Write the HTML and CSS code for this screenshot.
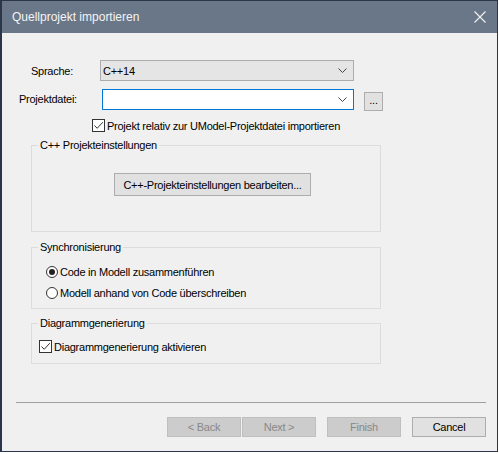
FILE: index.html
```html
<!DOCTYPE html>
<html lang="de">
<head>
<meta charset="utf-8">
<title>Quellprojekt importieren</title>
<link rel="stylesheet" href="styles.css">
</head>
<body>
<div class="window">
  <div class="titlebar">
    <span class="title">Quellprojekt importieren</span>
    <svg class="close" width="12" height="12" viewBox="0 0 12 12"><path d="M0.5 0.5 L11.5 11.5 M11.5 0.5 L0.5 11.5" stroke="#f2f2f2" stroke-width="1.1" fill="none"/></svg>
  </div>
  <div class="content">
    <div class="row row-lang">
      <span class="label label-lang">Sprache:</span>
      <div class="combo">
        <span class="combo-text">C++14</span>
        <svg class="chev" width="9" height="5" viewBox="0 0 9 5"><path d="M0.5 0.5 L4.5 4.5 L8.5 0.5" stroke="#444" fill="none"/></svg>
      </div>
    </div>
    <div class="row row-file">
      <span class="label label-file">Projektdatei:</span>
      <div class="field">
        <svg class="chev" width="9" height="5" viewBox="0 0 9 5"><path d="M0.5 0.5 L4.5 4.5 L8.5 0.5" stroke="#444" fill="none"/></svg>
      </div>
      <div class="dots-btn">...</div>
    </div>
    <div class="row row-rel">
      <span class="checkbox"><svg width="11" height="11" viewBox="0 0 11 11"><path d="M1.5 5.5 L4.2 8.3 L9.8 2.2" stroke="#333" stroke-width="1" fill="none"/></svg></span>
      <span class="opt-text">Projekt relativ zur UModel-Projektdatei importieren</span>
    </div>

    <div class="group group-cpp">
      <div class="group-title">C++ Projekteinstellungen</div>
      <div class="btn btn-edit">C++-Projekteinstellungen bearbeiten...</div>
    </div>

    <div class="group group-sync">
      <div class="group-title">Synchronisierung</div>
      <div class="opt opt-radio">
        <span class="radio checked"></span>
        <span class="opt-text">Code in Modell zusammenführen</span>
      </div>
      <div class="opt opt-radio">
        <span class="radio"></span>
        <span class="opt-text">Modell anhand von Code überschreiben</span>
      </div>
    </div>

    <div class="group group-diag">
      <div class="group-title">Diagrammgenerierung</div>
      <div class="opt opt-check">
        <span class="checkbox"><svg width="11" height="11" viewBox="0 0 11 11"><path d="M1.5 5.5 L4.2 8.3 L9.8 2.2" stroke="#333" stroke-width="1" fill="none"/></svg></span>
        <span class="opt-text">Diagrammgenerierung aktivieren</span>
      </div>
    </div>

    <div class="separator"></div>

    <div class="buttons">
      <div class="btn btn-nav disabled">&lt; Back</div>
      <div class="btn btn-nav disabled btn-next">Next &gt;</div>
      <div class="btn btn-nav disabled btn-gap">Finish</div>
      <div class="btn btn-nav btn-gap">Cancel</div>
    </div>
  </div>
</div>
</body>
</html>
```

FILE: styles.css
```css
* { box-sizing: border-box; }
html, body { margin: 0; padding: 0; background: #ffffff; }
body {
  font-family: "Liberation Sans", Arial, sans-serif;
  font-size: 11px;
  letter-spacing: -0.25px;
  color: #000;
}
.window {
  width: 498px;
  height: 452px;
  border: 1px solid #2b3748;
  border-left-width: 2px;
  background: #f0f0f0;
  display: flex;
  flex-direction: column;
}
.titlebar {
  height: 32px;
  background: #6a7789;
  display: flex;
  align-items: center;
  justify-content: space-between;
  padding: 0 10px 0 10px;
  flex: none;
}
.title {
  color: #f4f4f4;
  font-size: 12px;
  letter-spacing: 0;
}
.close { margin-right: 1px; }
.content {
  display: flex;
  flex-direction: column;
  flex: 1;
}
.row {
  display: flex;
  align-items: center;
}
.row-lang { margin-top: 27px; height: 21px; }
.label-lang { margin-left: 29px; width: 69px; flex: none; }
.combo {
  width: 254px;
  height: 21px;
  background: #e5e5e5;
  border: 1px solid #adadad;
  display: flex;
  align-items: center;
  justify-content: space-between;
  padding: 0 6px 0 2px;
  flex: none;
}
.row-file { margin-top: 8px; height: 20px; align-items: flex-start; }
.label-file { margin-left: 17px; width: 83px; line-height: 20px; flex: none; }
.field {
  width: 252px;
  height: 21px;
  background: #ffffff;
  border: 1px solid #0078d7;
  display: flex;
  align-items: center;
  justify-content: flex-end;
  padding: 0 6px 0 2px;
  flex: none;
}
.dots-btn {
  margin-left: 10px;
  margin-top: 3px;
  width: 19px;
  height: 19px;
  background: #e1e1e1;
  border: 1px solid #adadad;
  font-size: 11px;
  line-height: 14px;
  text-align: center;
  flex: none;
}
.row-rel { margin-top: 10px; height: 13px; }
.row-rel .checkbox { margin-left: 90px; }
.checkbox {
  width: 13px;
  height: 13px;
  border: 1px solid #333;
  background: #fff;
  display: inline-flex;
  align-items: center;
  justify-content: center;
  flex: none;
}
.opt-text { margin-left: 2px; white-space: nowrap; }
.group {
  margin-left: 29px;
  width: 350px;
  border: 1px solid #dcdcdc;
  display: flex;
  flex-direction: column;
  flex: none;
}
.group-title {
  align-self: flex-start;
  margin: -8px 0 0 6px;
  padding: 0 2px;
  line-height: 14px;
  height: 14px;
  background: #f0f0f0;
  white-space: nowrap;
}
.group-cpp { margin-top: 13px; height: 87px; }
.btn {
  background: #e1e1e1;
  border: 1px solid #adadad;
  display: flex;
  align-items: center;
  justify-content: center;
  white-space: nowrap;
  flex: none;
}
.btn-edit {
  margin: 21px 0 0 82px;
  width: 197px;
  height: 23px;
  align-self: flex-start;
}
.group-sync { margin-top: 15px; height: 62px; }
.opt { display: flex; align-items: center; }
.opt-radio { height: 21px; }
.group-sync .group-title + .opt { margin-top: 7px; }
.radio {
  margin-left: 14px;
  width: 12px;
  height: 12px;
  border: 1px solid #333;
  border-radius: 50%;
  background: #fff;
  display: inline-flex;
  align-items: center;
  justify-content: center;
  flex: none;
}
.radio.checked::after {
  content: "";
  width: 6px;
  height: 6px;
  border-radius: 50%;
  background: #222;
}
.group-diag { margin-top: 14px; height: 41px; }
.opt-check { margin-top: 10px; height: 13px; }
.opt-check .checkbox { margin-left: 7px; }
.separator {
  margin: 38px 0 0 14px;
  width: 470px;
  height: 1px;
  background: #a0a0a0;
  flex: none;
}
.buttons {
  margin-top: 14px;
  display: flex;
  justify-content: flex-end;
  padding-right: 11px;
}
.btn-nav { width: 74px; height: 20px; }
.btn-next { margin-left: 1px; }
.btn-gap { margin-left: 11px; }
.disabled {
  background: #cccccc;
  border-color: #bfbfbf;
  color: #888888;
}
```
